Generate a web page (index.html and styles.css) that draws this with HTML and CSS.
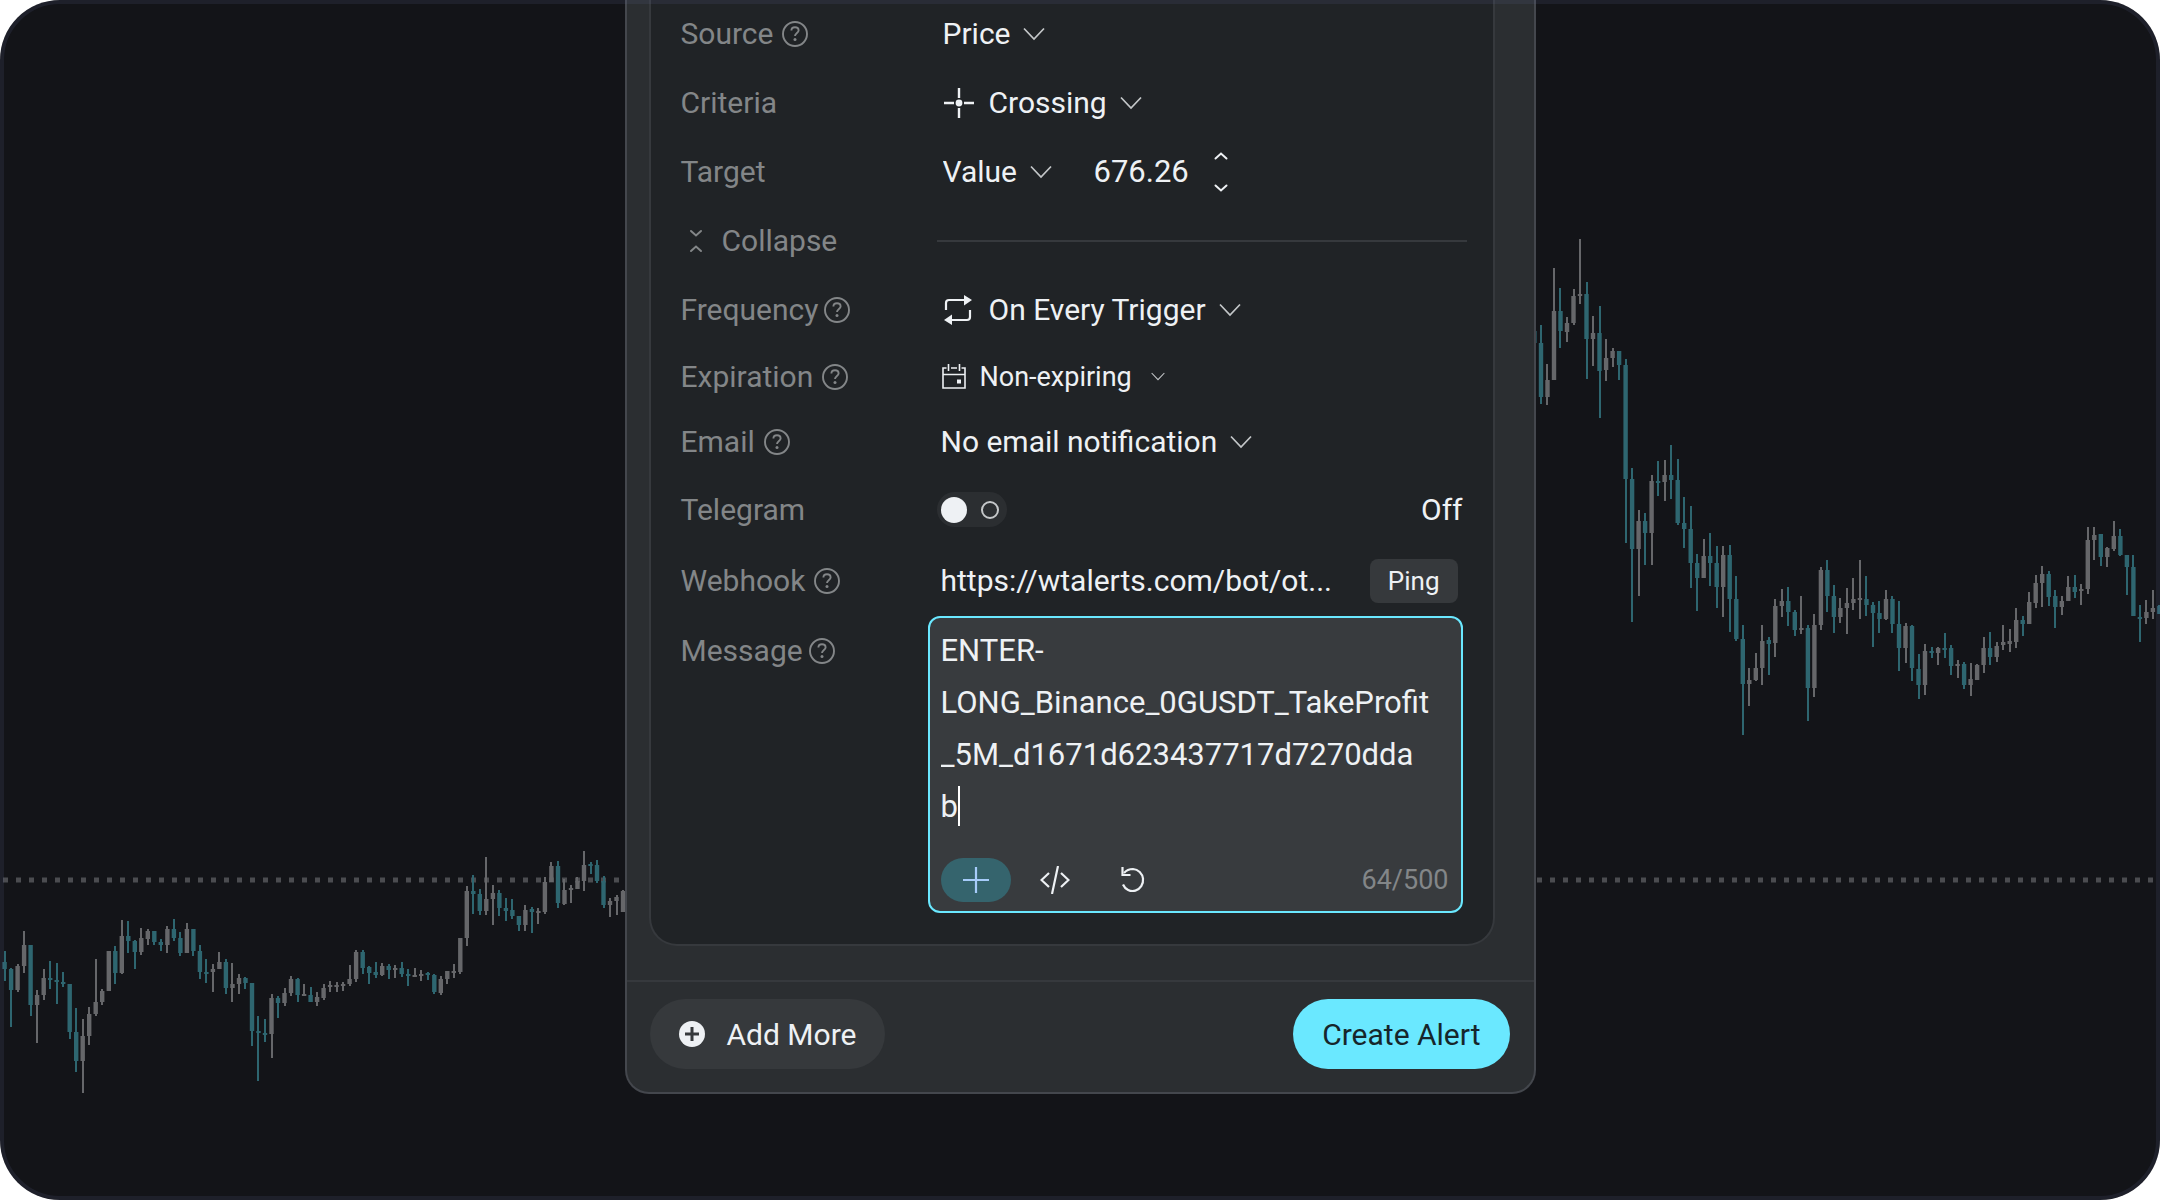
FILE: index.html
```html
<!DOCTYPE html>
<html lang="en">

<head>
    <meta charset="UTF-8">
    <meta name="viewport" content="width=device-width, initial-scale=1.0">
    <title>Create Alert</title>
    <link rel="stylesheet" href="styles.css">
</head>

<body>
    <svg class="sprite" aria-hidden="true">
        <symbol id="i-help" viewBox="0 0 26 26">
            <circle cx="13" cy="13" r="12" fill="none" stroke="currentColor" stroke-width="1.9"/>
            <path d="M9.4 9.6C9.4 7.6 11 6.3 13 6.3s3.6 1.3 3.6 3.2c0 2.4-3.6 2.7-3.6 5.6" fill="none" stroke="currentColor" stroke-width="1.9"/>
            <circle cx="13" cy="18.6" r="1.5" fill="currentColor"/>
        </symbol>
        <symbol id="i-chevron" viewBox="0 0 22 14">
            <path d="M1 1.5l10 10.5L21 1.5" fill="none" stroke="currentColor" stroke-width="1.7"/>
        </symbol>
        <symbol id="i-arrow" viewBox="0 0 14 8">
            <path d="M1.5 1.5L7 6.5l5.5-5" fill="none" stroke="currentColor" stroke-width="2" stroke-linecap="round"/>
        </symbol>
    </svg>

    <div class="frame">
        <svg class="chart" id="chart" viewBox="0 0 2160 1200" preserveAspectRatio="xMidYMid slice" aria-hidden="true"></svg>

        <form class="modal" id="alertForm">
            <div class="modal-body">
                <div class="card">
                    <div class="row">
                        <div class="label">
                            <label for="source">Source</label>
                            <svg class="help"><use href="#i-help"/></svg>
                        </div>
                        <div class="value indent">
                            <select id="source"><option>Price</option></select>
                            <svg class="chevron"><use href="#i-chevron"/></svg>
                        </div>
                    </div>

                    <div class="row">
                        <div class="label"><label for="criteria">Criteria</label></div>
                        <div class="value indent">
                            <svg class="icon-cross" viewBox="0 0 32 32">
                                <path d="M16 1v10M16 21v10M1 16h10M21 16h10" stroke="currentColor" stroke-width="2.4"/>
                                <circle cx="16" cy="16" r="3.4" fill="currentColor"/>
                            </svg>
                            <select id="criteria"><option>Crossing</option></select>
                            <svg class="chevron"><use href="#i-chevron"/></svg>
                        </div>
                    </div>

                    <div class="row">
                        <div class="label"><label for="target">Target</label></div>
                        <div class="value indent">
                            <select id="target"><option>Value</option></select>
                            <svg class="chevron"><use href="#i-chevron"/></svg>
                            <input class="number" type="text" id="targetValue" value="676.26" aria-label="Target value">
                            <div class="stepper">
                                <button type="button" aria-label="Increase"><svg class="arrow up"><use href="#i-arrow"/></svg></button>
                                <button type="button" aria-label="Decrease"><svg class="arrow"><use href="#i-arrow"/></svg></button>
                            </div>
                        </div>
                    </div>

                    <div class="row">
                        <button type="button" class="label collapse">
                            <svg class="icon-collapse" viewBox="0 0 14 24">
                                <path d="M2 2l5 4.5L12 2M2 22l5-4.5 5 4.5" fill="none" stroke="currentColor" stroke-width="2" stroke-linecap="round"/>
                            </svg>
                            Collapse
                        </button>
                        <hr class="divider">
                    </div>

                    <div class="row">
                        <div class="label tight">
                            <label for="frequency">Frequency</label>
                            <svg class="help"><use href="#i-help"/></svg>
                        </div>
                        <div class="value indent">
                            <svg class="icon-repeat" viewBox="0 0 30 32">
                                <path d="M3 16V9q0-3 3-3h16M27 16v7q0 3-3 3H8" fill="none" stroke="currentColor" stroke-width="2.2"/>
                                <path d="M21 1l8 5-8 5.5zM9 20.5l-8 5.5 8 5z" fill="currentColor"/>
                            </svg>
                            <select id="frequency"><option>On Every Trigger</option></select>
                            <svg class="chevron"><use href="#i-chevron"/></svg>
                        </div>
                    </div>

                    <div class="row compact">
                        <div class="label">
                            <label for="expiration">Expiration</label>
                            <svg class="help"><use href="#i-help"/></svg>
                        </div>
                        <div class="value small">
                            <svg class="icon-calendar" viewBox="0 0 24 26">
                                <path d="M4.5 4H1v20h22V4h-3.5M9 4h6M1 10.5h22M6.5 0v7M17.5 0v7" fill="none" stroke="currentColor" stroke-width="1.6"/>
                                <path d="M15 15.5h4v4h-4z" fill="currentColor"/>
                            </svg>
                            <select id="expiration"><option>Non-expiring</option></select>
                            <svg class="chevron"><use href="#i-chevron"/></svg>
                        </div>
                    </div>

                    <div class="row compact">
                        <div class="label">
                            <label for="email">Email</label>
                            <svg class="help"><use href="#i-help"/></svg>
                        </div>
                        <div class="value">
                            <select id="email"><option>No email notification</option></select>
                            <svg class="chevron"><use href="#i-chevron"/></svg>
                        </div>
                    </div>

                    <div class="row tall">
                        <div class="label"><label for="telegram">Telegram</label></div>
                        <div class="value between">
                            <input class="toggle" type="checkbox" id="telegram">
                            <span class="state">Off</span>
                        </div>
                    </div>

                    <div class="row tall">
                        <div class="label">
                            <label for="webhook">Webhook</label>
                            <svg class="help"><use href="#i-help"/></svg>
                        </div>
                        <div class="value">
                            <input class="url" type="text" id="webhook" value="https://wtalerts.com/bot/ot...">
                            <button type="button" class="ping">Ping</button>
                        </div>
                    </div>

                    <div class="row message-row">
                        <div class="label tight">
                            <label for="message">Message</label>
                            <svg class="help"><use href="#i-help"/></svg>
                        </div>
                        <div class="editor">
                            <textarea id="message" rows="4" spellcheck="false">ENTER-
LONG_Binance_0GUSDT_TakeProfit
_5M_d1671d623437717d7270dda
b</textarea>
                            <span class="caret"></span>
                            <div class="tools">
                                <button type="button" class="tool add" aria-label="Insert">
                                    <svg class="icon-plus" viewBox="0 0 26 26"><path d="M13 0v26M0 13h26" stroke="currentColor" stroke-width="2.2"/></svg>
                                </button>
                                <button type="button" class="tool" aria-label="Code">
                                    <svg class="icon-code" viewBox="0 0 30 28">
                                        <path d="M9 7L1.5 14 9 21M21 7l7.5 7-7.5 7M18 0l-6 28" fill="none" stroke="currentColor" stroke-width="2.2"/>
                                    </svg>
                                </button>
                                <button type="button" class="tool" aria-label="Reset">
                                    <svg class="icon-undo" viewBox="0 0 24 26">
                                        <path d="M3 6C6 2.5 9 2 12 2a10.500 11 0 1 1-10 15.500" fill="none" stroke="currentColor" stroke-width="2.2"/>
                                        <path d="M1.500 0v8h8" fill="none" stroke="currentColor" stroke-width="2.2"/>
                                    </svg>
                                </button>
                                <span class="counter">64/500</span>
                            </div>
                        </div>
                    </div>
                </div>
            </div>

            <div class="modal-footer">
                <button type="button" class="btn btn-secondary">
                    <svg class="icon-add" viewBox="0 0 26 26">
                        <circle cx="13" cy="13" r="13" fill="currentColor"/>
                        <path d="M13 6v14M6 13h14" stroke="#36393c" stroke-width="3"/>
                    </svg>
                    Add More
                </button>
                <button type="submit" class="btn btn-primary">Create Alert</button>
            </div>
        </form>
    </div>

    <script src="script.js"></script>
</body>
</html>
```
FILE: styles.css
```css
:root {
    --page-bg: #131418;
    --modal-bg: #2b2e31;
    --card-bg: #202326;
    --field-bg: #383b3e;
    --line: #36393d;
    --text: #eef1f4;
    --text-gray: #838688;
    --accent: #6ae8ff;
    --candle-up: #66676a;
    --candle-down: #2e6670;
}

* {
    box-sizing: border-box;
    margin: 0;
    padding: 0;
}

body {
    font-family: Roboto, 'Liberation Sans', sans-serif;
    font-size: 30px;
    background-color: white;
    color: var(--text);
}

button,
input,
select,
textarea {
    font: inherit;
    color: inherit;
    background: none;
    border: none;
    outline: none;
    appearance: none;
}

button {
    cursor: pointer;
}

svg {
    display: block;
    flex: none;
}

.sprite {
    position: absolute;
    width: 0;
    height: 0;
}

.frame {
    position: relative;
    display: flex;
    justify-content: center;
    align-items: flex-start;
    min-height: 100vh;
    overflow: hidden;
    border-radius: 60px;
    background-color: var(--page-bg);
}

/* translucent edge drawn over everything */
.frame::after {
    content: '';
    position: absolute;
    inset: 0;
    border: 4px solid rgba(96, 104, 150, 0.15);
    border-radius: 60px;
    pointer-events: none;
}

.chart {
    position: absolute;
    inset: 0;
    width: 100%;
    height: 100%;
}

.chart .up {
    fill: var(--candle-up);
}

.chart .down {
    fill: var(--candle-down);
}

.chart .price-line {
    stroke: #4b4c50;
    stroke-width: 5;
    stroke-dasharray: 5 8;
}

/* Modal */
.modal {
    position: relative;
    width: 100%;
    max-width: 911px;
    background-color: var(--modal-bg);
    border: 2px solid #44474d;
    border-top: none;
    border-radius: 0 0 24px 24px;
}

.modal-body {
    padding: 0 39px 34px 22px;
}

.card {
    margin-top: -1px;
    padding: 0 26px 31px 30px;
    background-color: var(--card-bg);
    border: 2px solid var(--line);
    border-top: none;
    border-radius: 0 0 28px 28px;
}

.row {
    display: grid;
    grid-template-columns: 256px 1fr;
    align-items: center;
    height: 69px;
}

.row.compact {
    height: 65px;
}

.row.tall {
    height: 71px;
}

.label {
    display: flex;
    align-items: center;
    gap: 9px;
    color: var(--text-gray);
}

.label.tight {
    gap: 6px;
}

.value {
    display: flex;
    align-items: center;
    padding-left: 4px;
}

.value.indent {
    padding-left: 6px;
}

.value.between {
    justify-content: space-between;
    padding: 0 4px 0 0;
}

.help {
    width: 26px;
    height: 26px;
}

.chevron {
    width: 22px;
    height: 14px;
    margin-left: 12px;
    color: #c4c7c9;
}

.value.small {
    font-size: 27px;
    padding-left: 5px;
}

.value.small .chevron {
    width: 14px;
    height: 9px;
    margin-left: 18px;
}

.icon-cross {
    width: 32px;
    height: 32px;
    margin-right: 14px;
}

.icon-repeat {
    width: 30px;
    height: 32px;
    margin-right: 16px;
}

.icon-calendar {
    width: 24px;
    height: 26px;
    margin-right: 14px;
}

.number {
    width: 100px;
    margin-left: 42px;
    font-size: 31px;
}

.stepper {
    display: flex;
    flex-direction: column;
    gap: 24px;
    margin-left: 20px;
}

.stepper button {
    display: block;
}

.arrow {
    width: 14px;
    height: 8px;
}

.arrow.up {
    transform: rotate(180deg);
}

.collapse {
    gap: 19px;
    padding-left: 8px;
}

.icon-collapse {
    width: 14px;
    height: 24px;
}

.divider {
    height: 2px;
    border: none;
    background-color: var(--line);
}

.toggle {
    display: flex;
    align-items: center;
    justify-content: space-between;
    width: 70px;
    height: 35px;
    padding: 0 8px 0 4px;
    border-radius: 18px;
    background-color: #2b2e31;
    cursor: pointer;
}

.toggle::before {
    content: '';
    width: 26px;
    height: 26px;
    border-radius: 50%;
    background-color: var(--text);
}

.toggle::after {
    content: '';
    width: 14px;
    height: 14px;
    border: 2px solid #c4c7c9;
    border-radius: 50%;
}

.url {
    flex: 1;
    min-width: 0;
}

.ping {
    height: 44px;
    margin-right: 9px;
    padding: 0 18px;
    border-radius: 8px;
    background-color: #36393c;
    font-size: 26px;
}

/* Message editor */
.message-row {
    height: auto;
    align-items: start;
}

.message-row .label {
    height: 69px;
}

.editor {
    position: relative;
    margin: 0 4px 0 -9px;
    padding: 7px 10px 9px 11px;
    border: 2px solid var(--accent);
    border-radius: 12px;
    background-color: var(--field-bg);
}

.editor textarea {
    display: block;
    width: 100%;
    height: 208px;
    font-size: 31px;
    line-height: 52px;
    resize: none;
    overflow: hidden;
}

.caret {
    position: absolute;
    left: 28px;
    top: 168px;
    width: 2px;
    height: 40px;
    background-color: white;
}

.tools {
    display: flex;
    align-items: center;
    margin-top: 25px;
}

.tool {
    display: flex;
    align-items: center;
    justify-content: center;
    width: 78px;
    height: 44px;
}

.tool.add {
    width: 70px;
    margin-right: 5px;
    border-radius: 22px;
    background-color: #35646d;
    color: #a6ccfa;
}

.icon-plus {
    width: 26px;
    height: 26px;
}

.icon-code {
    width: 30px;
    height: 28px;
}

.icon-undo {
    width: 24px;
    height: 26px;
}

.counter {
    margin-left: auto;
    padding-right: 2px;
    font-size: 27px;
    color: var(--text-gray);
}

/* Footer */
.modal-footer {
    display: flex;
    justify-content: space-between;
    padding: 17px 24px 23px 23px;
    border-top: 2px solid var(--line);
}

.btn {
    display: flex;
    align-items: center;
    height: 70px;
    padding: 0 29px;
    border-radius: 35px;
}

.btn-secondary {
    gap: 22px;
    background-color: #36393c;
}

.btn-primary {
    background-color: var(--accent);
    color: #16262b;
}

.icon-add {
    width: 26px;
    height: 26px;
}
```
FILE: script.js
```js
const SVG_NS = 'http://www.w3.org/2000/svg';
const STEP = 6.51;
const OFFSET = 4.6;

// Each series: index of the first candle, then "u/d high top bottom low"
const series = [
    {
        start: 0,
        data: `d 951 962 969 981,d 968 969 990 1027,u 964 966 990 992,u 931 945 966 973,d 945 945 1005 1016,
        u 990 995 1005 1043,u 969 978 995 1000,d 961 978 980 989,d 963 980 982 1004,d 972 982 984 987,
        d 984 984 1032 1039,d 1008 1032 1061 1072,u 1019 1036 1061 1093,u 1007 1014 1036 1045,u 959 1002 1014 1016,
        u 989 991 1002 1005,u 951 951 991 991,d 946 951 973 984,u 920 936 973 974,d 921 936 941 953,
        d 940 941 952 969,u 928 938 952 955,u 929 931 939 945,d 931 931 942 945,d 939 942 945 951,
        u 926 929 945 953,d 919 929 938 941,d 932 938 953 956,u 923 929 953 953,d 929 929 951 956,
        d 945 951 972 979,d 959 972 974 983,u 964 969 972 992,u 952 962 969 969,d 959 962 988 994,
        u 963 984 988 1002,u 974 978 984 994,d 977 978 983 989,d 983 983 1031 1046,d 1016 1031 1033 1081,
        d 1019 1033 1035 1042,u 994 998 1034 1058,d 996 998 1003 1018,u 988 993 1003 1006,u 976 979 993 996,
        d 978 979 995 1002,u 984 994 996 996,d 987 995 1002 1002,u 992 997 1002 1006,u 984 988 998 1000,
        u 981 985 987 992,u 982 985 987 992,u 982 984 986 991,u 965 979 984 986,u 950 952 979 982,
        d 950 952 968 974,d 966 967 973 984,d 962 972 975 978,u 963 966 975 976,d 964 966 970 979,
        u 965 968 970 978,d 962 968 974 977,d 969 974 976 986,u 968 975 977 977,u 970 974 976 981,
        d 972 973 975 980,d 974 975 992 994,u 976 979 993 995,u 971 971 979 984,u 964 971 973 978,
        u 938 938 972 974,u 886 891 938 946,d 875 891 894 914,d 889 894 911 915,u 857 899 911 915,
        u 885 893 899 925,d 890 893 908 916,d 898 908 911 921,d 899 910 916 919,d 916 916 925 931,
        u 905 910 925 931,d 907 909 912 933,u 908 911 913 924,u 877 882 912 914,u 862 866 882 882,
        d 861 866 903 908,u 879 890 904 905,u 885 888 890 903,u 877 881 889 889,u 851 865 881 891,
        d 862 864 866 874,d 860 865 881 883,d 876 881 905 908,u 898 901 905 917,u 895 897 901 915,
        u 890 891 912 912`
    },
    {
        start: 235,
        data: `d 331 331 343 343,d 325 343 397 404,u 364 380 397 405,u 268 311 380 380,d 288 311 331 348,
        u 317 323 332 342,u 289 296 323 325,u 239 294 296 304,d 282 294 339 379,u 316 333 339 366,
        d 306 333 371 418,u 339 358 370 381,u 348 351 358 367,d 351 351 365 380,d 359 365 479 543,
        d 468 479 549 622,u 510 521 549 596,d 513 521 533 565,u 475 481 533 565,d 461 481 483 496,
        u 460 475 482 501,d 445 475 480 499,d 459 480 523 525,d 497 523 529 548,d 506 529 563 588,
        d 554 563 578 611,u 539 556 578 578,d 533 556 563 586,d 546 563 587 608,u 546 555 587 617,
        d 545 555 599 632,d 576 599 639 641,d 625 639 684 735,u 668 680 684 706,u 653 668 680 681,
        u 625 641 668 685,d 637 640 644 675,u 599 606 643 657,u 589 601 606 617,d 587 601 612 626,
        d 610 612 630 636,u 596 628 630 634,d 625 628 688 721,u 614 625 688 697,u 567 570 625 630,
        d 560 570 596 612,d 585 596 617 633,u 598 608 617 623,u 588 603 608 634,u 578 599 603 610,
        u 560 598 600 619,d 576 599 605 616,d 602 605 613 647,d 601 613 619 633,u 590 599 619 620,
        d 596 599 624 633,d 601 624 648 671,u 623 626 648 663,d 625 626 668 681,d 654 669 685 699,
        u 644 651 685 695,d 647 651 653 658,u 647 648 653 665,d 633 648 650 658,d 645 648 666 675,
        u 660 664 666 678,d 662 664 685 689,u 663 679 685 696,u 664 665 680 680,u 637 648 665 673,
        d 632 648 657 665,u 642 646 657 662,u 625 642 645 650,u 629 641 644 652,u 608 620 642 648,
        d 616 620 624 636,u 592 602 624 624,u 575 583 603 608,u 566 574 583 607,d 571 574 597 606,
        d 590 596 607 628,u 596 601 607 615,u 576 587 601 601,d 575 587 592 598,u 584 589 591 605,
        u 527 540 589 594,u 527 535 540 560,d 534 534 557 566,u 547 548 557 567,u 521 536 549 551,
        d 529 536 555 556,d 555 555 567 595,d 555 567 616 616,d 605 617 619 642,u 600 612 618 624,
        u 590 608 612 619,d 605 606 614 614`
    }
];

const chart = document.getElementById('chart');

function add(tag, attrs) {
    const el = document.createElementNS(SVG_NS, tag);
    for (const key in attrs) {
        el.setAttribute(key, attrs[key]);
    }
    chart.appendChild(el);
}

// Price line
add('line', { class: 'price-line', x1: 3, y1: 880, x2: 2160, y2: 880 });

// Candles
series.forEach(function(part) {
    part.data.split(',').forEach(function(item, i) {
        const [dir, high, top, bottom, low] = item.trim().split(' ');
        const cls = dir === 'u' ? 'up' : 'down';
        const x = OFFSET + (part.start + i) * STEP;
        add('rect', { class: cls, x: Math.round(x - 1), y: high, width: 2, height: low - high });
        add('rect', { class: cls, x: (x - 2.2).toFixed(1), y: top, width: 4.4, height: bottom - top });
    });
});
```
